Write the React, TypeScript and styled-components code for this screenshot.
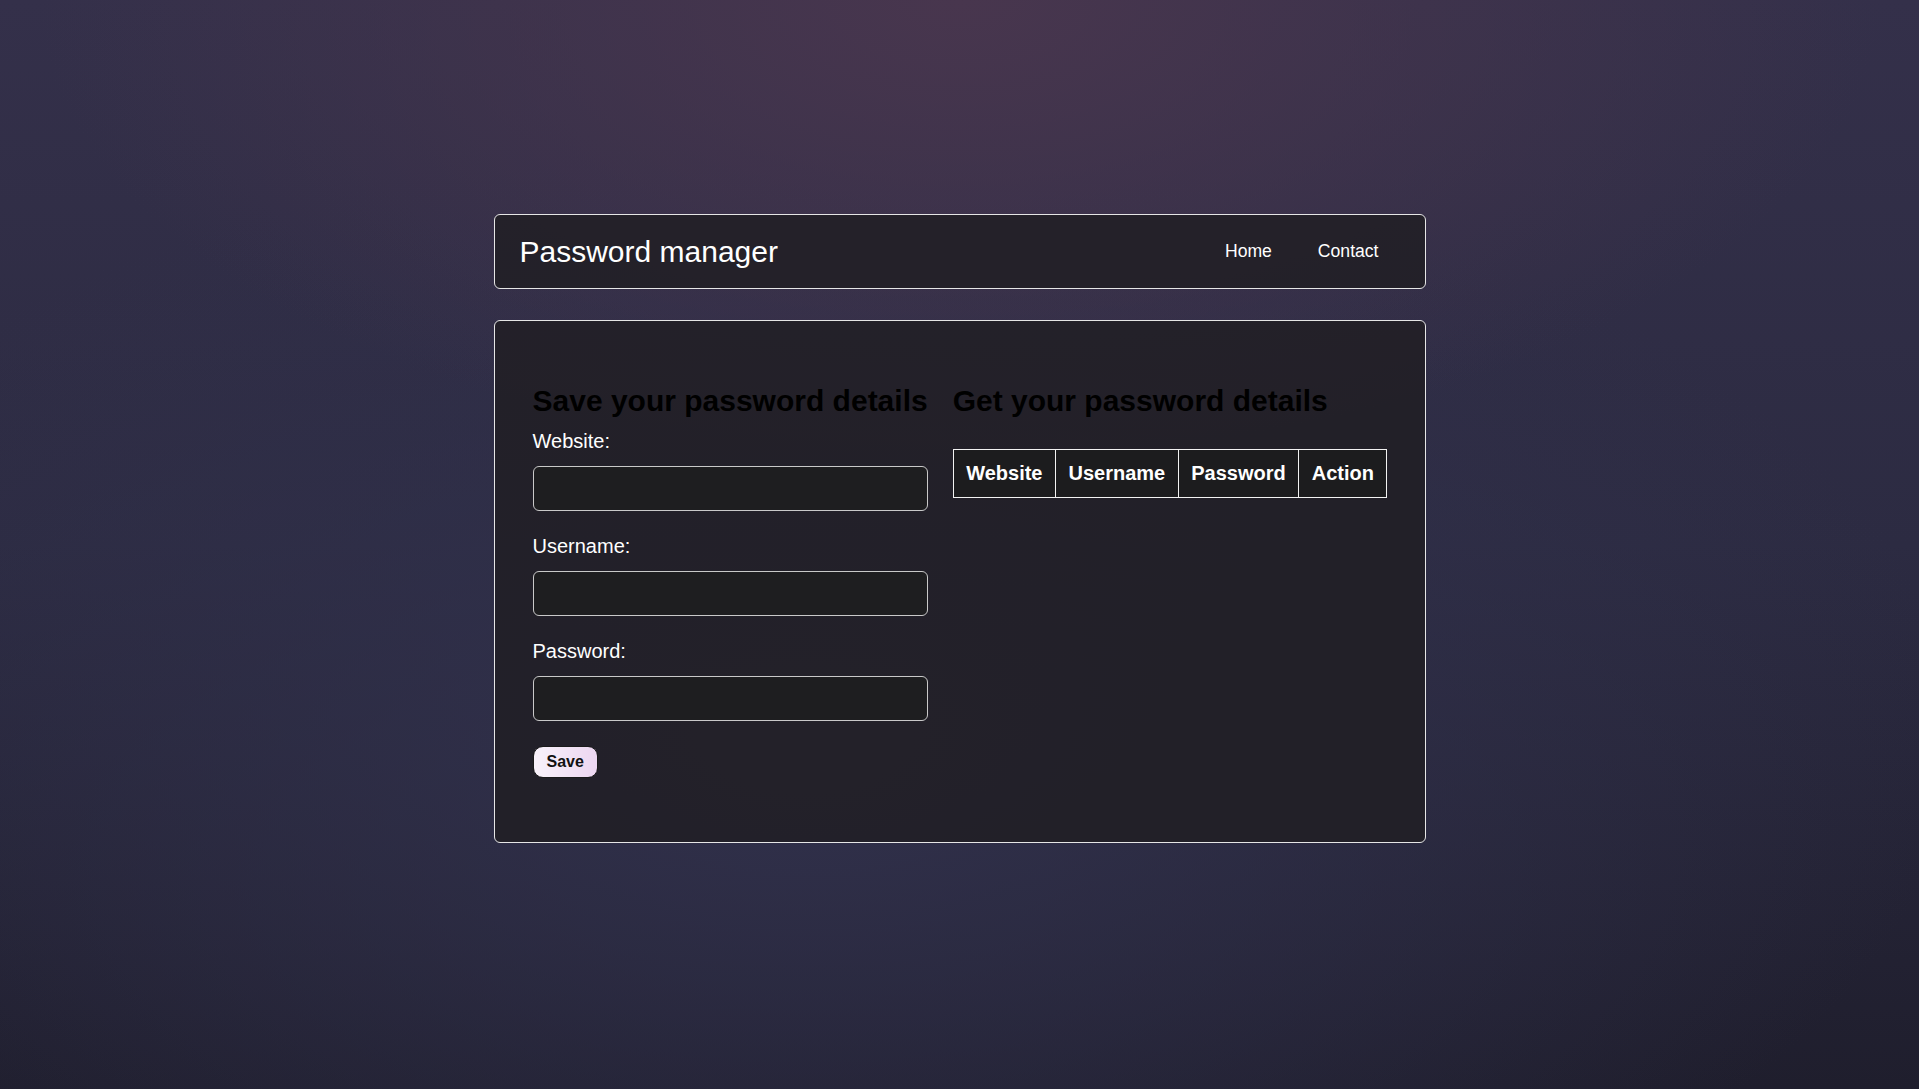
import styled, { createGlobalStyle } from "styled-components";

const GlobalStyle = createGlobalStyle`
  html, body {
    margin: 0;
    padding: 0;
  }

  body {
    min-height: 100vh;
    font-family: "Liberation Sans", Arial, sans-serif;
    color: #fff;
    background:
      radial-gradient(ellipse 48% 42% at 50% 0%, rgba(72, 54, 78, 1) 0%, rgba(72, 54, 78, 0) 100%),
      radial-gradient(ellipse 60% 55% at 42% 68%, rgba(49, 49, 76, 1) 0%, rgba(49, 49, 76, 0) 100%),
      linear-gradient(180deg, #34304a 0%, #2c2b42 50%, #1f1e2d 100%);
    background-attachment: fixed;
  }
`;

const Page = styled.div`
  width: 932px;
  margin: 0 auto;
  padding-top: 214px;
  display: flex;
  flex-direction: column;
  gap: 31px;
`;

const Navbar = styled.nav`
  height: 75px;
  box-sizing: border-box;
  display: flex;
  align-items: center;
  justify-content: space-between;
  padding: 0 23px 0 25px;
  border: 1px solid #e6e6e6;
  border-radius: 6px;
  background: rgba(33, 31, 36, 0.88);
`;

const Brand = styled.div`
  font-size: 30px;
  color: #fff;
`;

const NavLinks = styled.ul`
  display: flex;
  list-style: none;
  margin: 0;
  padding: 0;
`;

const NavLink = styled.a`
  display: block;
  padding: 0 23px;
  font-size: 17.6px;
  color: #fff;
  text-decoration: none;
`;

const Card = styled.main`
  box-sizing: border-box;
  padding: 63px 38px 64px;
  border: 1px solid #e6e6e6;
  border-radius: 6px;
  background: rgba(33, 31, 36, 0.88);
  display: flex;
  gap: 25px;
`;

const Column = styled.section<{ $grow?: boolean }>`
  display: flex;
  flex-direction: column;
  align-items: flex-start;
  flex: ${(p) => (p.$grow ? "1" : "0 0 auto")};
`;

const Heading = styled.h2<{ $gap: number }>`
  margin: 0 0 ${(p) => p.$gap}px;
  font-size: 30px;
  font-weight: 700;
  color: #000;
  white-space: nowrap;
`;

const Form = styled.form`
  display: flex;
  flex-direction: column;
  align-self: stretch;
`;

const Label = styled.label`
  display: block;
  font-size: 20px;
  color: #fff;
  margin-bottom: 13px;
`;

const Input = styled.input`
  box-sizing: border-box;
  width: 100%;
  height: 45px;
  margin: 0 0 24px;
  padding: 0 10px;
  border: 1px solid #c9c9c9;
  border-radius: 6px;
  background: #1e1e20;
  color: #fff;
  font-size: 18px;
  font-family: inherit;
  outline: none;
`;

const SaveButton = styled.button`
  align-self: flex-start;
  height: 32px;
  margin-top: 1px;
  padding: 0 13px;
  border: 1px solid #1a1a1a;
  border-radius: 10px;
  background: linear-gradient(90deg, #f8f2fa 0%, #ecd6f1 100%);
  color: #111;
  font-family: inherit;
  font-size: 16px;
  font-weight: 700;
  cursor: pointer;
`;

const Table = styled.table`
  border-collapse: collapse;
  background: #1c1c1e;
`;

const HeadCell = styled.th`
  padding: 12px 12.5px;
  border: 1px solid #f2f2f2;
  font-size: 20px;
  font-weight: 700;
  color: #fff;
  text-align: center;
`;

const columns = ["Website", "Username", "Password", "Action"];

const App = () => {
  return (
    <>
      <GlobalStyle />
      <Page>
        <Navbar>
          <Brand>Password manager</Brand>
          <NavLinks>
            <li>
              <NavLink href="#">Home</NavLink>
            </li>
            <li>
              <NavLink href="#">Contact</NavLink>
            </li>
          </NavLinks>
        </Navbar>

        <Card>
          <Column>
            <Heading $gap={12}>Save your password details</Heading>
            <Form onSubmit={(e) => e.preventDefault()}>
              <Label htmlFor="website">Website:</Label>
              <Input id="website" type="text" />
              <Label htmlFor="username">Username:</Label>
              <Input id="username" type="text" />
              <Label htmlFor="password">Password:</Label>
              <Input id="password" type="password" />
              <SaveButton type="submit">Save</SaveButton>
            </Form>
          </Column>

          <Column $grow>
            <Heading $gap={31}>Get your password details</Heading>
            <Table>
              <thead>
                <tr>
                  {columns.map((col) => (
                    <HeadCell key={col}>{col}</HeadCell>
                  ))}
                </tr>
              </thead>
            </Table>
          </Column>
        </Card>
      </Page>
    </>
  );
};

export default App;
